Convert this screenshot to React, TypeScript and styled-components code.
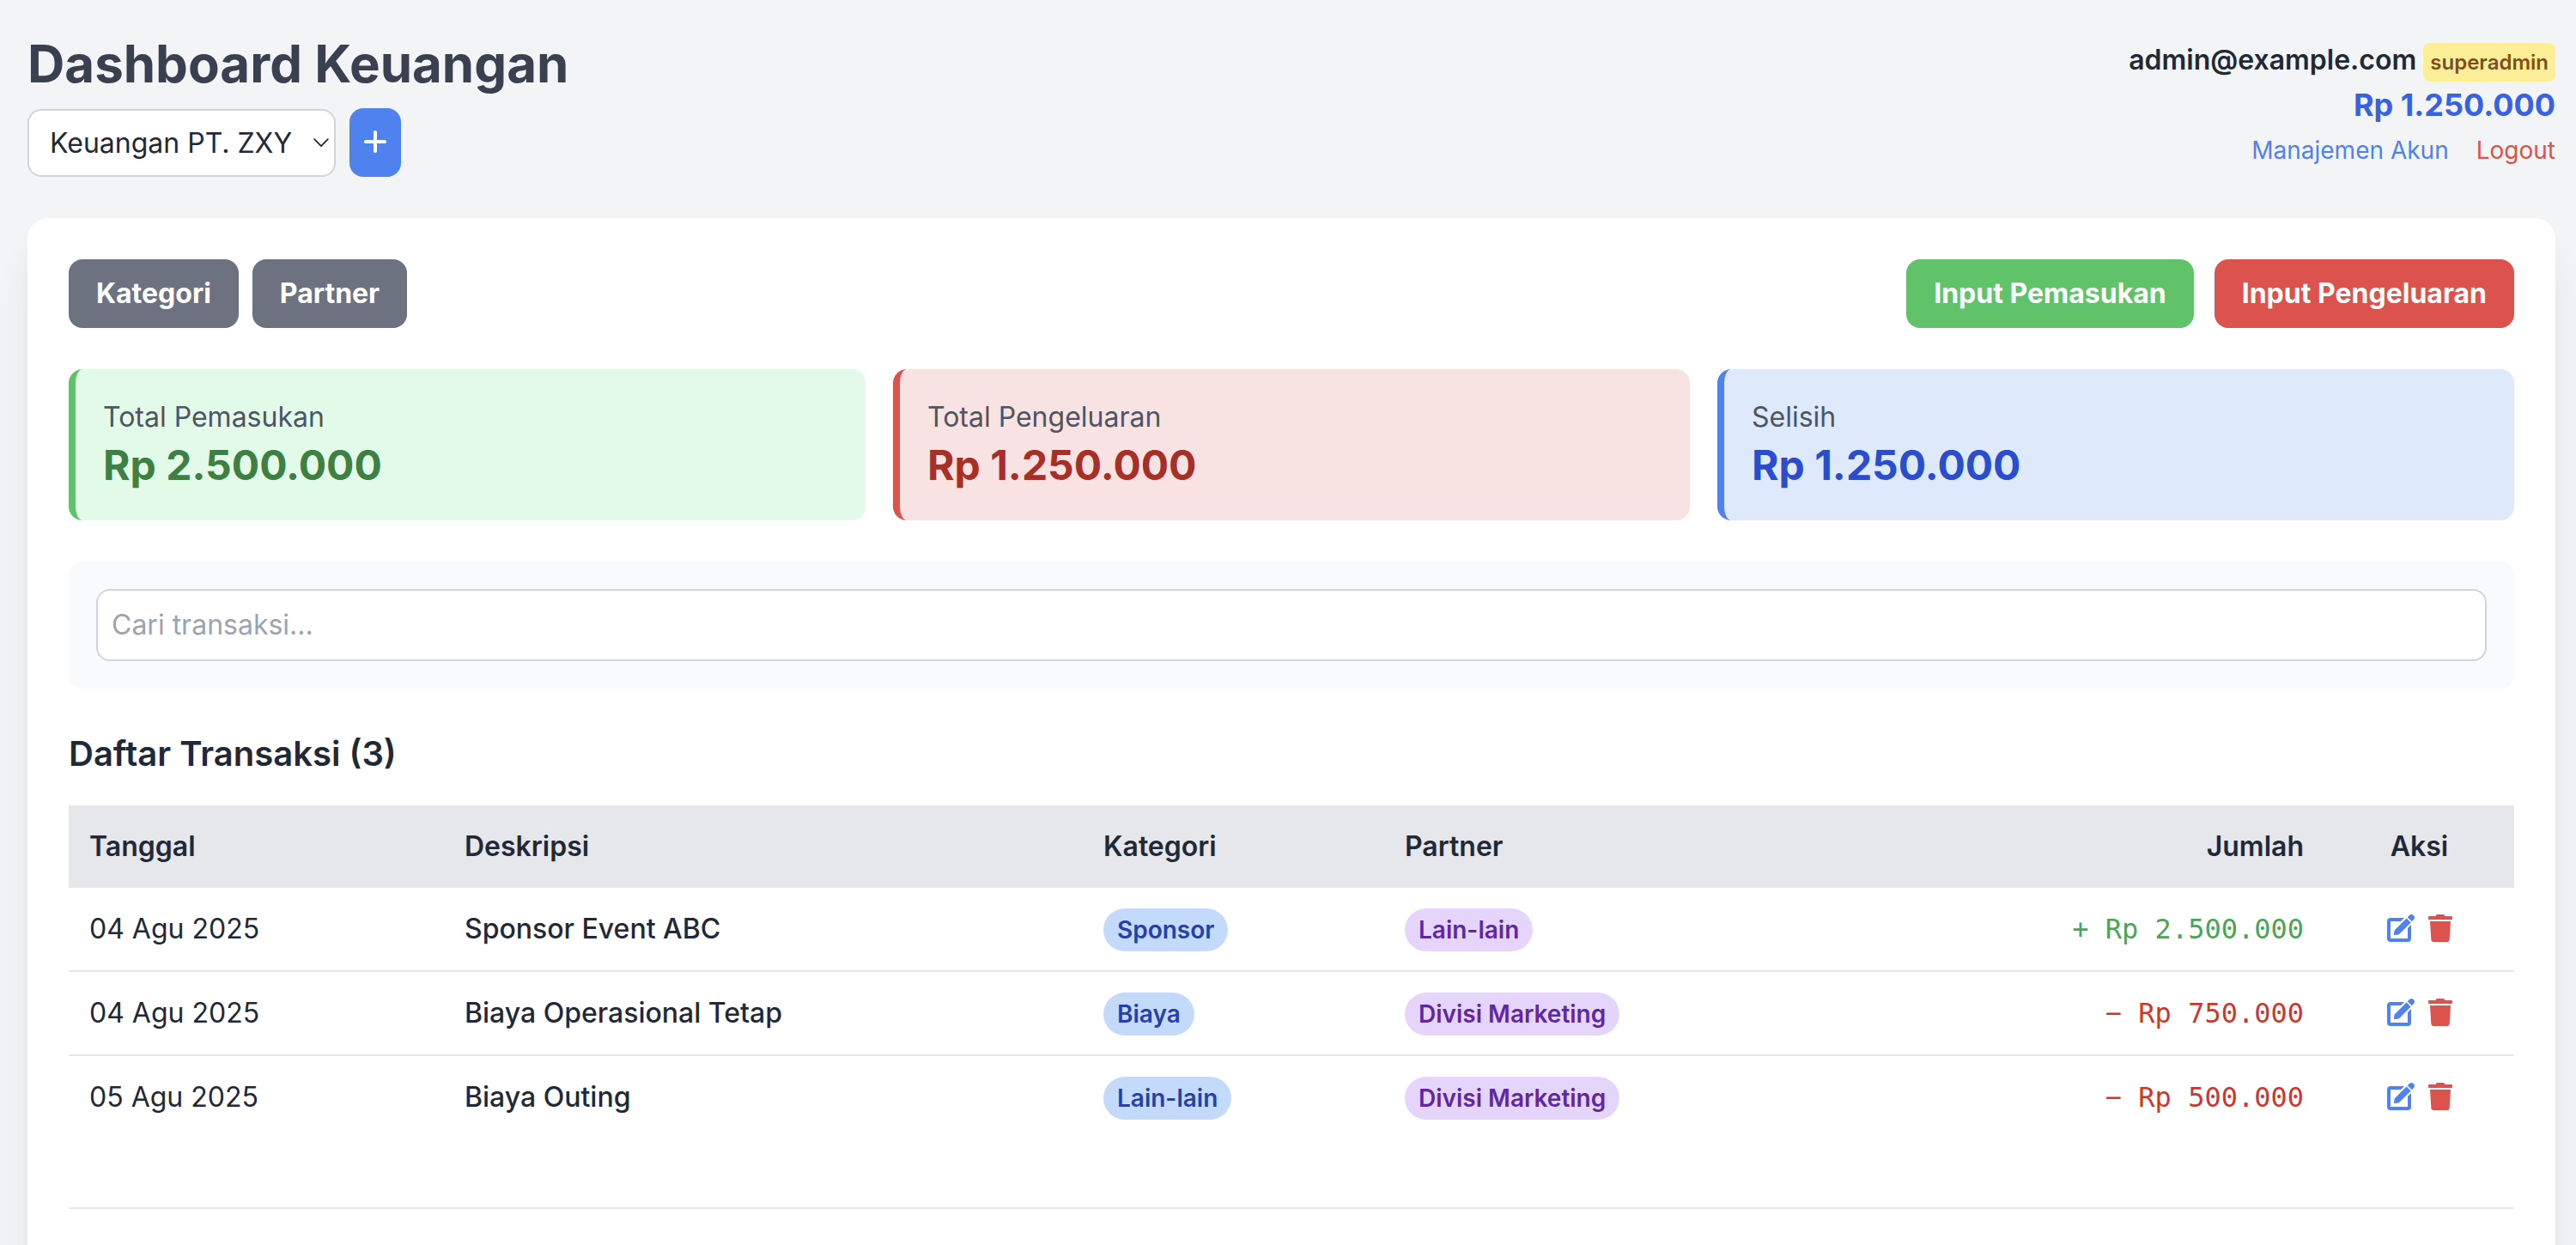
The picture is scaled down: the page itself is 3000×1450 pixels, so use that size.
import React from "react";
import styled, { createGlobalStyle } from "styled-components";
import { FaPlus } from "react-icons/fa6";

const GlobalStyle = createGlobalStyle`
  *, *::before, *::after { box-sizing: border-box; }
  body { margin: 0; background: #f2f4f6; }
  h1, h2, p { margin: 0; }
  button, input { font: inherit; color: inherit; }
`;

const Page = styled.div`
  height: 1450px;
  overflow: hidden;
  padding: 38px 24px 0 32px;
  background: #f2f4f6;
  color: #1f2937;
  font-family: Inter, "Liberation Sans", sans-serif;
  font-size: 32px;
  line-height: 48px;
`;

const Header = styled.header`
  display: flex;
  justify-content: space-between;
  align-items: center;
  margin-bottom: 48px;
`;

const Title = styled.h1`
  font-size: 60px;
  line-height: 72px;
  font-weight: 700;
  color: #394150;
`;

const BookPicker = styled.div`
  display: flex;
  align-items: flex-end;
  gap: 16px;
  margin-top: 16px;
`;

const BookSelect = styled.button`
  display: flex;
  align-items: center;
  justify-content: space-between;
  width: 359px;
  height: 79px;
  padding: 0 6px 0 24px;
  border: 2px solid #d1d5db;
  border-radius: 16px;
  background: #fff;
  text-align: left;
`;

const AddButton = styled.button`
  display: flex;
  align-items: center;
  justify-content: center;
  width: 60px;
  height: 80px;
  padding: 0 0 2px;
  border: 0;
  border-radius: 16px;
  background: #4f82ee;
  color: #fff;
`;

const Account = styled.div`
  text-align: right;
`;

const Email = styled.p`
  font-weight: 600;
`;

const Role = styled.span`
  padding: 8px;
  border-radius: 8px;
  background: #fcee96;
  color: #7c4f1d;
  font-size: 24px;
  line-height: 32px;
`;

const Balance = styled.p`
  font-size: 36px;
  line-height: 56px;
  font-weight: 700;
  color: #3662e3;
`;

const AccountLink = styled.a<{ $color: string }>`
  font-size: 28px;
  line-height: 40px;
  color: ${(p) => p.$color};
  & + & { margin-left: 32px; }
`;

const Card = styled.main`
  min-height: 1400px;
  padding: 48px;
  border-radius: 24px;
  background: #fff;
  box-shadow: 0 40px 50px -10px rgba(0, 0, 0, 0.1), 0 16px 20px -12px rgba(0, 0, 0, 0.1);
`;

const Toolbar = styled.div`
  display: flex;
  justify-content: space-between;
  margin-bottom: 48px;
`;

const ButtonGroup = styled.div<{ $gap: number }>`
  display: flex;
  gap: ${(p) => p.$gap}px;
`;

const Button = styled.button<{ $bg: string }>`
  padding: 16px 32px;
  border: 0;
  border-radius: 16px;
  background: ${(p) => p.$bg};
  color: #fff;
  font-weight: 700;
`;

const Stats = styled.section`
  display: grid;
  grid-template-columns: repeat(3, 1fr);
  gap: 32px;
  margin-bottom: 48px;
`;

const Stat = styled.div<{ $bg: string; $accent: string }>`
  padding: 32px;
  border-left: 8px solid ${(p) => p.$accent};
  border-radius: 16px;
  background: ${(p) => p.$bg};
`;

const StatLabel = styled.p`
  color: #4d5562;
`;

const StatValue = styled.p<{ $color: string }>`
  font-size: 48px;
  line-height: 64px;
  font-weight: 700;
  color: ${(p) => p.$color};
`;

const SearchPanel = styled.div`
  padding: 32px;
  margin-bottom: 48px;
  border-radius: 16px;
  background: #f9fafb;
`;

const SearchInput = styled.input`
  display: block;
  width: 100%;
  height: 84px;
  padding: 15px 16px 17px;
  border: 2px solid #d1d5db;
  border-radius: 16px;
  background: #fff;
  &::placeholder { color: #9ea3ae; opacity: 1; }
`;

const SectionTitle = styled.h2`
  margin-bottom: 32px;
  font-size: 40px;
  line-height: 56px;
  font-weight: 600;
`;

const Table = styled.table`
  width: 100%;
  table-layout: fixed;
  border-spacing: 0;
`;

const Col = styled.col<{ $w: number }>`
  width: ${(p) => p.$w}px;
`;

const Th = styled.th<{ $align?: string }>`
  padding: 24px;
  background: #e5e7eb;
  font-weight: 600;
  text-align: ${(p) => p.$align ?? "left"};
`;

const Row = styled.tr`
  &:not(:last-child) > td { border-bottom: 2px solid #e5e7eb; }
`;

const Td = styled.td<{ $weight?: number }>`
  height: 96px;
  padding: 24px;
  vertical-align: top;
  font-weight: ${(p) => p.$weight ?? 400};
`;

const Amount = styled(Td)<{ $income: boolean }>`
  font-family: "DejaVu Sans Mono", "Liberation Mono", monospace;
  text-align: right;
  color: ${(p) => (p.$income ? "#4ea354" : "#c9392f")};
`;

const Pill = styled.span<{ $bg: string; $color: string }>`
  padding: 8px 16px;
  border-radius: 999px;
  background: ${(p) => p.$bg};
  color: ${(p) => p.$color};
  font-size: 28px;
  line-height: 40px;
  font-weight: 600;
`;

const Actions = styled.div`
  display: flex;
  align-items: center;
  justify-content: center;
  gap: 16px;
  height: 46px;
`;

const IconButton = styled.button<{ $color: string }>`
  display: flex;
  padding: 0;
  border: 0;
  background: none;
  color: ${(p) => p.$color};
`;

const Footer = styled.div`
  margin-top: 80px;
  border-top: 2px solid #e5e7eb;
`;

const stats = [
  { label: "Total Pemasukan", value: "Rp 2.500.000", bg: "#e2fae8", accent: "#60c36a", color: "#3e8043" },
  { label: "Total Pengeluaran", value: "Rp 1.250.000", bg: "#f8e3e2", accent: "#dc524d", color: "#a92e26" },
  { label: "Selisih", value: "Rp 1.250.000", bg: "#dee9fb", accent: "#4f82ee", color: "#2a4dd0" },
];

const rows = [
  { date: "04 Agu 2025", desc: "Sponsor Event ABC", category: "Sponsor", partner: "Lain-lain", amount: "+ Rp 2.500.000", income: true },
  { date: "04 Agu 2025", desc: "Biaya Operasional Tetap", category: "Biaya", partner: "Divisi Marketing", amount: "− Rp 750.000", income: false },
  { date: "05 Agu 2025", desc: "Biaya Outing", category: "Lain-lain", partner: "Divisi Marketing", amount: "− Rp 500.000", income: false },
];

const Chevron = () => (
  <svg width="18" height="11" viewBox="0 0 18 11" fill="none" stroke="#1f2937" strokeWidth="1.8" strokeLinecap="round" strokeLinejoin="round">
    <path d="M1.2 1.2 9 9.2l7.8-8" />
  </svg>
);

const EditIcon = () => (
  <svg width="32" height="32" viewBox="0 0 32 32" fill="currentColor">
    <path d="M4 4h16l-4 4H4v20h20V16l4-4v16a4 4 0 0 1-4 4H4a4 4 0 0 1-4-4V8a4 4 0 0 1 4-4z" />
    <path d="M22.6 4.4l5 5-13.5 13.5a1.6 1.6 0 0 1-.9.5L8.8 24a.7.7 0 0 1-.8-.8l.6-4.4a1.6 1.6 0 0 1 .5-.9z" />
    <path d="M23.8 3.2l2.1-2.1a3.54 3.54 0 0 1 5 5l-2.1 2.1z" />
  </svg>
);

const TrashIcon = () => (
  <svg width="28" height="32" viewBox="0 0 448 512" fill="currentColor">
    <path d="M432 32H312l-9.4-18.7A24 24 0 0 0 281.1 0H166.8a23.72 23.72 0 0 0-21.4 13.3L136 32H16A16 16 0 0 0 0 48v32a16 16 0 0 0 16 16h416a16 16 0 0 0 16-16V48a16 16 0 0 0-16-16zM53.2 467a48 48 0 0 0 47.9 45h245.8a48 48 0 0 0 47.9-45L416 128H32z" />
  </svg>
);

export default function App() {
  return (
    <>
      <GlobalStyle />
      <Page>
        <Header>
          <div>
            <Title>Dashboard Keuangan</Title>
            <BookPicker>
              <BookSelect>
                Keuangan PT. ZXY
                <Chevron />
              </BookSelect>
              <AddButton aria-label="Tambah">
                <FaPlus size={32} />
              </AddButton>
            </BookPicker>
          </div>
          <Account>
            <Email>
              admin@example.com <Role>superadmin</Role>
            </Email>
            <Balance>Rp 1.250.000</Balance>
            <div>
              <AccountLink $color="#4f82ee">Manajemen Akun</AccountLink>
              <AccountLink $color="#dc524d">Logout</AccountLink>
            </div>
          </Account>
        </Header>
        <Card>
          <Toolbar>
            <ButtonGroup $gap={16}>
              <Button $bg="#6d7280">Kategori</Button>
              <Button $bg="#6d7280">Partner</Button>
            </ButtonGroup>
            <ButtonGroup $gap={24}>
              <Button $bg="#60c36a">Input Pemasukan</Button>
              <Button $bg="#dc524d">Input Pengeluaran</Button>
            </ButtonGroup>
          </Toolbar>
          <Stats>
            {stats.map((s) => (
              <Stat key={s.label} $bg={s.bg} $accent={s.accent}>
                <StatLabel>{s.label}</StatLabel>
                <StatValue $color={s.color}>{s.value}</StatValue>
              </Stat>
            ))}
          </Stats>
          <SearchPanel>
            <SearchInput placeholder="Cari transaksi..." />
          </SearchPanel>
          <SectionTitle>Daftar Transaksi (3)</SectionTitle>
          <Table>
            <colgroup>
              <Col $w={437} />
              <Col $w={744} />
              <Col $w={351} />
              <Col $w={560} />
              <Col $w={535} />
              <Col $w={221} />
            </colgroup>
            <thead>
              <tr>
                <Th>Tanggal</Th>
                <Th>Deskripsi</Th>
                <Th>Kategori</Th>
                <Th>Partner</Th>
                <Th $align="right">Jumlah</Th>
                <Th $align="center">Aksi</Th>
              </tr>
            </thead>
            <tbody>
              {rows.map((r) => (
                <Row key={r.desc}>
                  <Td>{r.date}</Td>
                  <Td $weight={500}>{r.desc}</Td>
                  <Td>
                    <Pill $bg="#c4dafb" $color="#273faa">{r.category}</Pill>
                  </Td>
                  <Td>
                    <Pill $bg="#e6d5fa" $color="#6026a5">{r.partner}</Pill>
                  </Td>
                  <Amount $income={r.income}>{r.amount}</Amount>
                  <Td>
                    <Actions>
                      <IconButton $color="#4f82ee" aria-label="Edit">
                        <EditIcon />
                      </IconButton>
                      <IconButton $color="#dc524d" aria-label="Hapus">
                        <TrashIcon />
                      </IconButton>
                    </Actions>
                  </Td>
                </Row>
              ))}
            </tbody>
          </Table>
          <Footer />
        </Card>
      </Page>
    </>
  );
}
